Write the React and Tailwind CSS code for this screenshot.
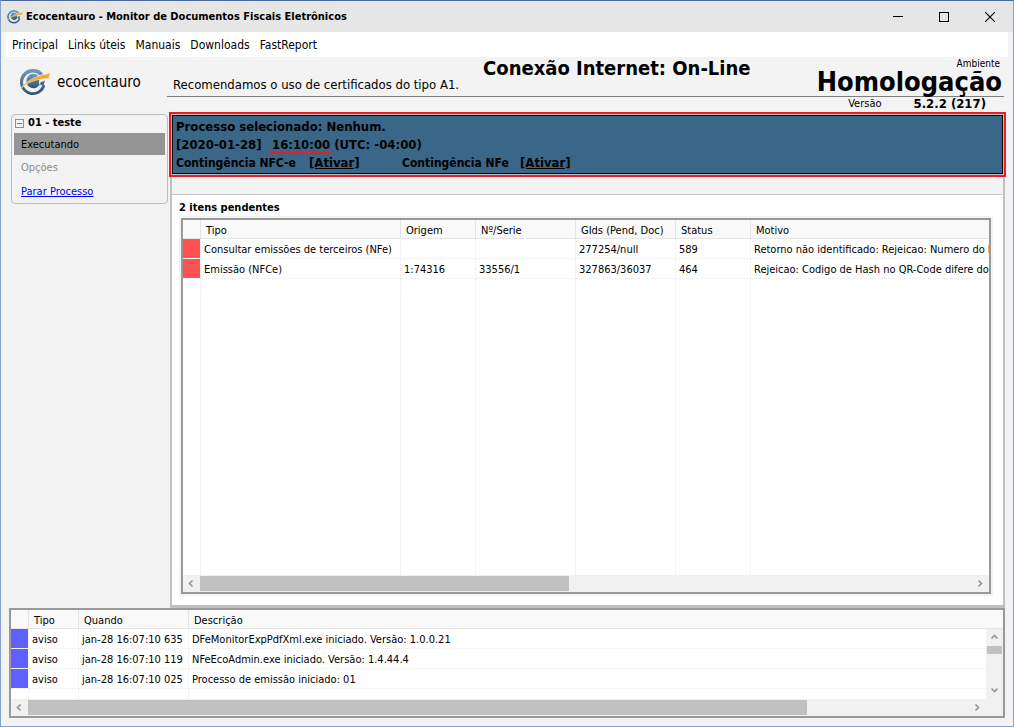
import React from "react";

function Logo({ className }) {
  return (
    <svg viewBox="0 0 30 27" className={className} aria-hidden="true">
      <defs>
        <linearGradient id="ring" x1="0" y1="0" x2="0" y2="1">
          <stop offset="0" stopColor="#6f9cc0" />
          <stop offset="1" stopColor="#2b5374" />
        </linearGradient>
      </defs>
      <path
        d="M13 0A13 13 0 1 0 25.300 17L22.600 14.500A9.800 9.800 0 1 1 19.500 6.200L23.500 5.200A13 13 0 0 0 13 0z"
        fill="url(#ring)"
      />
      <path d="M19.600 8.200A7.200 7.200 0 1 0 20.600 13.200L25 11.500Q24.500 15 22.500 16.500L19 15z" fill="url(#ring)" />
      <path d="M0 20.200C6 12.500 14 7 30.300 4.200L28.800 9.400C17 9.600 8 13 0 20.200z" fill="#f9a825" stroke="#f3f3f3" strokeWidth="0.500" />
    </svg>
  );
}

function Chevron({ direction }) {
  const paths = {
    left: "M5.500 1.500 2.500 4.500l3 3",
    right: "M2.500 1.500l3 3-3 3",
    up: "M1.500 5.500l3-3 3 3",
    down: "M1.500 2.500l3 3 3-3",
  };
  return (
    <svg viewBox="0 0 9 9" className="h-[9px] w-[9px]" aria-hidden="true">
      <path d={paths[direction]} fill="none" stroke="#979797" strokeWidth="1.700" />
    </svg>
  );
}

function ArrowButton({ direction, label }) {
  return (
    <button
      type="button"
      aria-label={label}
      className="flex h-[17px] w-[17px] shrink-0 items-center justify-center"
    >
      <Chevron direction={direction} />
    </button>
  );
}

function HorizontalBar({ thumb, corner }) {
  return (
    <div className={`flex h-[17px] shrink-0 items-center bg-[#f1f1f1] ${corner ? "pr-[17px]" : ""}`}>
      <ArrowButton direction="left" label="Rolar para a esquerda" />
      <div className="h-[15px] min-w-0 flex-1">
        <div className="h-full bg-[#c1c1c1]" style={{ width: thumb }} />
      </div>
      <ArrowButton direction="right" label="Rolar para a direita" />
    </div>
  );
}

function Grid({ label, columns, rows, marker, children, thumb }) {
  const head = "h-[19px] border-b border-[#e5e5e5] bg-[#f9f9f9] p-0 pl-[5px] pt-[3px] text-left font-normal";
  const cell = "border-b border-dotted border-[#ebebeb] p-0 pl-[3px] pt-0.5";
  return (
    <div className="flex min-h-0 min-w-0 flex-1 flex-col border-2 border-[#999999] bg-white">
      <div className="flex min-h-0 flex-1 overflow-hidden">
        <table
          aria-label={label}
          className="h-full w-full table-fixed border-separate border-spacing-0 whitespace-nowrap text-[11px] leading-[14px]"
        >
          <thead>
            <tr>
              <th className="h-[19px] w-[18px] border-b border-r border-[#e5e5e5] bg-[#f9f9f9] p-0" />
              {columns.map((c, i) => (
                <th
                  key={c.name}
                  className={`${head} ${c.width} ${i < columns.length - 1 ? "border-r" : ""}`}
                >
                  {c.name}
                </th>
              ))}
            </tr>
          </thead>
          <tbody>
            {rows.map((row, r) => (
              <tr key={r}>
                <td
                  className={`h-[20px] border-b border-r border-dotted border-[#ebebeb] bg-clip-padding p-0 ${marker}`}
                />
                {row.map((v, i) => (
                  <td
                    key={i}
                    className={`h-[20px] overflow-hidden ${cell} ${i < row.length - 1 ? "border-r" : ""}`}
                  >
                    {v}
                  </td>
                ))}
              </tr>
            ))}
            <tr aria-hidden="true">
              <td className="border-r border-dotted border-[#ebebeb] p-0" />
              {columns.map((c, i) => (
                <td
                  key={c.name}
                  className={`border-dotted border-[#ebebeb] p-0 ${i < columns.length - 1 ? "border-r" : ""}`}
                />
              ))}
            </tr>
          </tbody>
        </table>
        {children}
      </div>
      <HorizontalBar thumb={thumb} corner={Boolean(children)} />
    </div>
  );
}

const pendingColumns = [
  { name: "Tipo", width: "w-[200px]" },
  { name: "Origem", width: "w-[75px]" },
  { name: "Nº/Serie", width: "w-[100px]" },
  { name: "GIds (Pend, Doc)", width: "w-[100px]" },
  { name: "Status", width: "w-[75px]" },
  { name: "Motivo", width: "" },
];

const pendingRows = [
  [
    "Consultar emissões de terceiros (NFe)",
    "",
    "",
    "277254/null",
    "589",
    "Retorno não identificado: Rejeicao: Numero do N",
  ],
  [
    "Emissão (NFCe)",
    "1:74316",
    "33556/1",
    "327863/36037",
    "464",
    "Rejeicao: Codigo de Hash no QR-Code difere do",
  ],
];

const logColumns = [
  { name: "Tipo", width: "w-[50px]" },
  { name: "Quando", width: "w-[110px]" },
  { name: "Descrição", width: "" },
];

const logRows = [
  ["aviso", "jan-28 16:07:10 635", "DFeMonitorExpPdfXml.exe iniciado. Versão: 1.0.0.21"],
  ["aviso", "jan-28 16:07:10 119", "NFeEcoAdmin.exe iniciado. Versão: 1.4.44.4"],
  ["aviso", "jan-28 16:07:10 025", "Processo de emissão iniciado: 01"],
];

function TitleBar() {
  return (
    <div className="flex h-[31px] shrink-0 items-center bg-[#e6e6e6] pl-1.5">
      <Logo className="h-[14px] w-[16px]" />
      <h1 className="ml-[3px] pt-0.5 text-[11px] font-bold">
        Ecocentauro - Monitor de Documentos Fiscais Eletrônicos
      </h1>
      <div className="ml-auto flex h-full">
        <button type="button" aria-label="Minimizar" className="flex w-[46px] items-center justify-center">
          <svg viewBox="0 0 10 10" className="h-[10px] w-[10px]" shapeRendering="crispEdges">
            <path d="M0 4.500h10" stroke="#000" fill="none" />
          </svg>
        </button>
        <button type="button" aria-label="Maximizar" className="flex w-[46px] items-center justify-center">
          <svg viewBox="0 0 10 10" className="h-[10px] w-[10px]" shapeRendering="crispEdges">
            <path d="M.5.5h9v9h-9z" stroke="#000" fill="none" />
          </svg>
        </button>
        <button type="button" aria-label="Fechar" className="flex w-[46px] items-center justify-center">
          <svg viewBox="0 0 10 10" className="h-[10px] w-[10px]">
            <path d="M0 0l10 10M10 0 0 10" stroke="#000" strokeWidth="1.100" fill="none" />
          </svg>
        </button>
      </div>
    </div>
  );
}

function Header() {
  return (
    <header className="flex h-[55px] shrink-0 pl-[19px]">
      <div className="flex w-[147px] shrink-0 items-center gap-[7px] pb-1">
        <Logo className="h-[27px] w-[30px]" />
        <span className="text-[15px]">ecocentauro</span>
      </div>
      <div className="mr-[9px] flex min-w-0 flex-1 flex-col whitespace-nowrap">
        <div className="flex h-[40px] border-b border-[#7f7f7f] pl-1.5">
          <p className="self-end pb-0.5 text-[13px] leading-[18px]">
            Recomendamos o uso de certificados do tipo A1.
          </p>
          <p className="ml-6 text-[20px] font-bold leading-[22px]">Conexão Internet: On-Line</p>
          <div className="ml-auto flex flex-col items-end pr-0.5">
            <span className="pr-0.5 text-[10px] leading-[14px]">Ambiente</span>
            <strong className="text-[27px] leading-[22px]">Homologação</strong>
          </div>
        </div>
        <div className="flex items-center justify-end gap-8 pr-[18px] leading-[14px]">
          <span className="text-[11px]">Versão</span>
          <strong className="text-[13px]">5.2.2 (217)</strong>
        </div>
      </div>
    </header>
  );
}

function Sidebar() {
  return (
    <aside className="mr-px mt-0.5 h-[90px] w-[157px] shrink-0 rounded border border-[#bdbdbd] px-0.5">
      <div className="flex h-[18px] items-center gap-1 pb-0.5">
        <button
          type="button"
          aria-label="Recolher"
          className="ml-px flex h-[9px] w-[9px] items-center justify-center border border-[#8f8f8f]"
        >
          <span className="h-px w-[5px] bg-[#777777]" />
        </button>
        <strong className="text-[11px]">01 - teste</strong>
      </div>
      <ul className="text-[11px]">
        <li className="flex h-[22px] items-center bg-[#959595] pl-[7px] pt-0.5">Executando</li>
        <li className="flex h-6 items-center pl-[7px] pt-[3px] text-[#8c8c8c]">Opções</li>
        <li className="flex h-6 items-center pl-[7px] pt-[3px]">
          <a href="#parar" className="text-[#0000ff] underline">
            Parar Processo
          </a>
        </li>
      </ul>
    </aside>
  );
}

function StatusPanel() {
  return (
    <div className="border-2 border-[#ed1c24] bg-[#c0c0c0] p-px">
      <div className="whitespace-pre border border-black bg-[#3a6687] pb-px pl-[3px] pt-0.5 text-[13px] font-bold leading-[18px]">
        <p>Processo selecionado: Nenhum.</p>
        <p className="flex">
          <span className="w-[96px]">[2020-01-28]</span>
          <span className="relative mr-1">
            16:10:00
            <span className="absolute -left-0.5 -right-0.5 bottom-0 h-0.5 bg-[#ed1c24]" />
          </span>
          <span>(UTC: -04:00)</span>
        </p>
        <p className="flex">
          <span className="w-[133px] text-[12px]">Contingência NFC-e</span>
          <a href="#nfce" className="w-[93px]">
            <span className="underline">[Ativar]</span>
          </a>
          <span className="w-[118px] text-[12px]">Contingência NFe</span>
          <a href="#nfe" className="underline">
            [Ativar]
          </a>
        </p>
      </div>
    </div>
  );
}

export default function App() {
  return (
    <div className="flex h-screen flex-col overflow-hidden border border-[#84a1cf] border-t-[#4a6a9b] bg-[#f3f3f3] font-['DejaVu_Sans_Condensed','DejaVu_Sans',sans-serif] text-black">
      <TitleBar />
      <nav className="mx-[5px] flex h-[25px] shrink-0 items-center gap-2.5 bg-white pl-1.5 text-[12px]">
        {["Principal", "Links úteis", "Manuais", "Downloads", "FastReport"].map((m) => (
          <button key={m} type="button">
            {m}
          </button>
        ))}
      </nav>
      <Header />
      <main className="mx-2 flex min-h-0 flex-1 flex-col pb-2">
        <div className="flex min-h-0 flex-1 pl-0.5">
          <Sidebar />
          <section className="-mr-px flex min-w-0 flex-1 flex-col">
            <StatusPanel />
            <div className="mx-px flex min-h-0 flex-1 flex-col border-x-2 border-b-[3px] border-[#c0c0c0] pt-[17px]">
              <div className="flex min-h-0 flex-1 flex-col border-t border-[#c8c8c8] bg-white px-1.5 pb-[9px]">
                <h2 className="pl-px pt-1 text-[11px] font-bold leading-[17px]">2 itens pendentes</h2>
                <div className="ml-px mr-1 flex min-h-0 flex-1 border-2 border-[#f3f3f3]">
                  <Grid
                    label="Itens pendentes"
                    columns={pendingColumns}
                    rows={pendingRows}
                    marker="bg-[#ff5151]"
                    thumb="47.800%"
                  />
                </div>
              </div>
            </div>
          </section>
        </div>
        <section className="flex h-[110px] shrink-0">
          <Grid
            label="Avisos"
            columns={logColumns}
            rows={logRows}
            marker="bg-[#6060ff]"
            thumb="82.800%"
          >
            <div className="flex w-[17px] shrink-0 flex-col">
              <div className="h-[19px] border-b border-[#e5e5e5] bg-[#f9f9f9]" />
              <div className="flex flex-1 flex-col bg-[#f1f1f1]">
                <ArrowButton direction="up" label="Rolar para cima" />
                <div className="mx-px h-2 bg-[#c1c1c1]" />
                <div className="flex-1" />
                <ArrowButton direction="down" label="Rolar para baixo" />
              </div>
            </div>
          </Grid>
        </section>
      </main>
    </div>
  );
}
